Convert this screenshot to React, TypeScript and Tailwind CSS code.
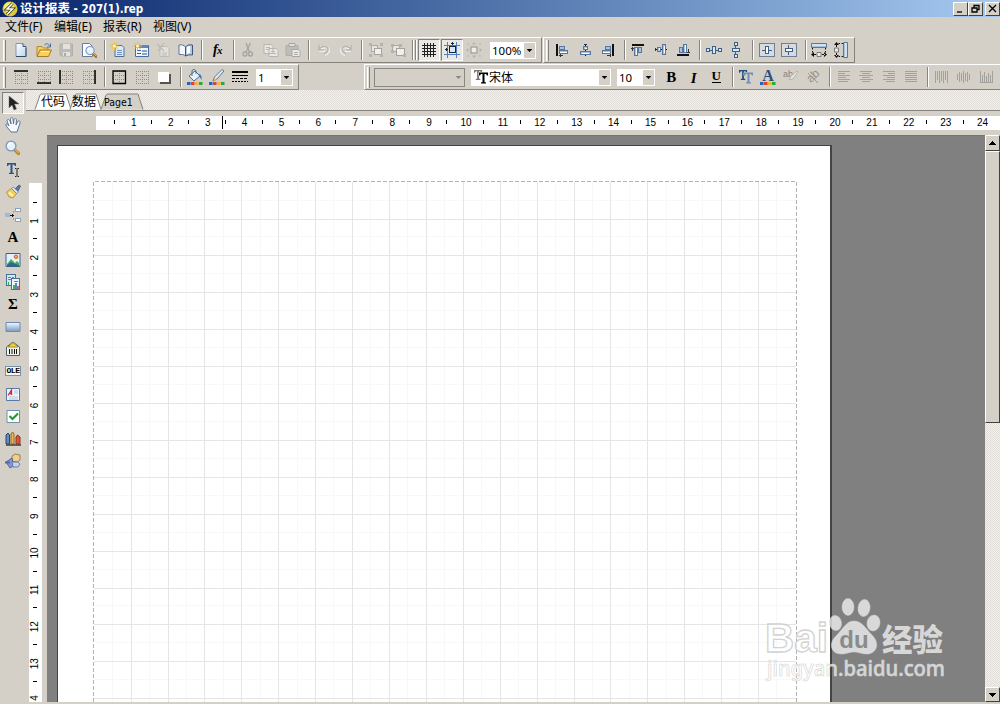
import React from "react";

type Kids = { children?: React.ReactNode };

const Svg = ({ children, crisp }: Kids & { crisp?: boolean }) => (
  <svg width="16" height="16" viewBox="0 0 16 16" className="block shrink-0" fill="none" shapeRendering={crisp ? "crispEdges" : "auto"}>
    {children}
  </svg>
);

const Cell = ({ children, w = "w-[22.5px]" }: Kids & { w?: string }) => (
  <div className={`flex h-[22px] shrink-0 items-center justify-center ${w}`}>{children}</div>
);

const Sep = ({ c = "w-[7px] pl-[4px]" }: { c?: string }) => (
  <div className={`flex h-[20px] shrink-0 ${c}`}>
    <div className="h-full w-px bg-[#888580]" />
    <div className="h-full w-px bg-white" />
  </div>
);

const Grip = () => (
  <div className="flex h-[21px] w-[4px] shrink-0">
    <div className="w-px bg-white" />
    <div className="w-px bg-[#e4e1dc]" />
    <div className="w-px bg-[#85827c]" />
  </div>
);

const Arrow = ({ dim, small }: { dim?: boolean; small?: boolean }) => (
  <svg width={small ? 5 : 7} height={small ? 3 : 4} viewBox="0 0 7 4" shapeRendering={small ? "auto" : "crispEdges"}>
    <path d="M0 0h7v1H6v1H5v1H4v1H3V3H2V2H1V1H0z" fill={dim ? "#8a8883" : "#000"} />
  </svg>
);

const Drop = () => (
  <div className="my-px mr-px flex w-[11px] shrink-0 items-center justify-center bg-[#d4d0c8]">
    <Arrow small />
  </div>
);

/* File icons */
const NewIcon = () => (
  <Svg>
    <defs><linearGradient id="sheet" x2="1" y2="1"><stop stopColor="#fff" /><stop offset="1" stopColor="#bcd4ee" /></linearGradient></defs>
    <path d="M3 1.500h7l3 3v10H3z" fill="url(#sheet)" stroke="#8397b0" />
    <path d="M10 1.500v3h3" stroke="#3d5978" fill="#c6d7e8" />
    <path d="M3 14.500h10v-9" stroke="#304b6a" />
  </Svg>
);
const OpenIcon = () => (
  <Svg>
    <path d="M1 14V4.500h5L7.500 6H12v3" fill="#f3cd62" stroke="#b08a35" />
    <path d="M1 14.500 4 8h11.500l-3 6.500z" fill="#fbd05a" stroke="#a67c26" />
    <path d="M5 9.500h8" stroke="#fff0b0" />
    <path d="M8.500 3c2-2 4-1.500 5 1M14.500 1.500v3.500H11" stroke="#4d6b91" />
  </Svg>
);
const SaveIcon = () => (
  <Svg>
    <path d="M2 2h12.500v12H3l-1-1z" fill="#bcbbb8" stroke="#b0afac" />
    <path d="M5 2h7v5H5zM5 10h7v4H5z" fill="#e3e2df" />
    <path d="M6 11h2v3H6z" fill="#aaa" />
  </Svg>
);
const Lens = ({ handle = "#b98a2c" }: { handle?: string }) => (
  <g>
    <path d="m9.500 9.500 4 4" stroke={handle} strokeWidth="3.200" strokeLinecap="round" />
    <path d="m9.500 8.800 4 4" stroke="#f0d070" strokeWidth="1" />
    <circle cx="6" cy="6" r="4.900" fill="#e3f2fc" stroke="#7d97b8" strokeWidth="1.300" />
    <path d="M3.300 5.500c.5-1.500 1.500-2.200 3-2.200" stroke="#fff" strokeWidth="1.600" />
  </g>
);
const PreviewIcon = () => (
  <Svg>
    <path d="M1.500 1.500h7l3 3v10h-10z" fill="#fafcff" stroke="#657d9b" />
    <g transform="translate(4 3.500) scale(.84)"><Lens handle="#b3682a" /></g>
  </Svg>
);
const Spark = () => (
  <>
    <path d="M4.500-.5v9M0 4h9M1.500 1l6 6M7.500 1l-6 6" stroke="#eebb30" />
    <circle cx="4.500" cy="4" r="1.600" fill="#fff3b0" />
  </>
);
const NewPageIcon = () => (
  <Svg>
    <path d="M5 3.500h7l2 2v9H5z" fill="#dceaf8" stroke="#4f6f99" />
    <path d="M7 8.500h5M7 10.500h5M7 12.500h5" stroke="#6d93c4" />
    <Spark />
  </Svg>
);
const NewDialogIcon = () => (
  <Svg>
    <path d="M2.500 3.500h13v11h-13z" fill="#f0f5fb" stroke="#486d9c" />
    <path d="M3 3h12v3H3z" fill="#5e87bb" />
    <path d="M4 8.500h4M4 11.500h4" stroke="#365c89" /><path d="M9 8h5v2H9zM9 11h5v2H9z" fill="#86a6cd" />
    <Spark />
  </Svg>
);
const DelPageIcon = () => (
  <Svg>
    <path d="M5 4.500h7l2 2v8H5z" fill="#e2e0dc" stroke="#bebcb7" />
    <path d="m2 2 7 7M9 1 3 9M7 11h5M7 13h5" stroke="#bbb9b4" strokeWidth="1.200" />
  </Svg>
);
const BookIcon = () => (
  <Svg>
    <path d="M1 3c3-.5 4.500 0 6.500 2v9C6 12.500 4 12.300 1 12.500z" fill="#f4f8fc" stroke="#5d7696" />
    <path d="M7.500 5c1.500-2 3.500-2.500 7-2v10c-3-.5-5 0-7 1z" fill="#b4cae4" stroke="#3c5678" />
    <path d="M9 5.500c1-1 2-1.300 3-1.400v7c-1 0-2 .3-3 1z" fill="#fff" />
  </Svg>
);

/* Edit icons */
const CutIcon = () => (
  <Svg><g stroke="#a5a4a0" strokeWidth="1.300"><path d="m6 1 3.500 9M10.500 1 6 10" /><circle cx="5" cy="12" r="2" /><circle cx="10.500" cy="12" r="2" /></g></Svg>
);
const CopyIcon = () => (
  <Svg>
    <path d="M1 2.500h7l2 2v7H1zM6 6.500h7l2 2v6H6z" fill="#e8e7e4" stroke="#b6b5b1" />
    <path d="M3 5.500h4M3 7.500h3M8 9.500h4M8 11.500h5" stroke="#b7b6b2" />
  </Svg>
);
const PasteIcon = () => (
  <Svg>
    <path d="M1 3.500h12v10H1z" fill="#bfbdb9" stroke="#aeada9" /><path d="M4 1.500h6v3H4z" fill="#ddd" stroke="#a5a5a5" />
    <path d="M7 7.500h6l2 2v5H7z" fill="#ecebe8" stroke="#a8a7a3" /><path d="M9 10.500h4M9 12.500h4" stroke="#aaa" />
  </Svg>
);
const UndoIcon = ({ flip }: { flip?: boolean }) => (
  <Svg><g transform={flip ? "translate(16 0) scale(-1 1)" : ""}><path d="M3 3v5h5M3 8c1-4 8-5 9-1 .5 3-2 4-4 5" stroke="#f0efec" strokeWidth="2" transform="translate(1 1)" /><path d="M3 3v5h5M3 8c1-4 8-5 9-1 .5 3-2 4-4 5" stroke="#b8b7b3" strokeWidth="1.500" /></g></Svg>
);
const GroupIcon = ({ alt }: { alt?: boolean }) => (
  <Svg crisp>
    <path d={alt ? "M2.500 3.500h7v6h-7z" : "M3.500 3.500h6v6h-6z"} fill="#e7e6e3" stroke="#aaa9a5" />
    <path d={alt ? "M6.500 6.500h8v7h-8z" : "M6.500 6.500h7v6h-7z"} fill="#f0efec" stroke="#a3a29e" />
    {(alt ? [[1, 2], [9, 2], [1, 8], [13, 12]] : [[1, 1], [12, 1], [1, 12], [12, 12]]).map(([x, y]) => (
      <path key={`${x}-${y}`} d={`M${x} ${y}h3v3h-3z`} fill="#b4b3ae" />
    ))}
  </Svg>
);
const GridIcon = () => (
  <Svg crisp><path d="M3.500 1v14M6.500 1v14M9.500 1v14M12.500 1v14M1 3.500h14M1 6.500h14M1 9.500h14M1 12.500h14" stroke="#222" /></Svg>
);
const SnapIcon = () => (
  <Svg crisp>
    <path d="M3.500 0v16M12.500 0v16M0 3.500h16M0 12.500h16" stroke="#4b80c4" />
    <path d="M5.500 4.500h6v6h-6z" fill="#dbe6f2" stroke="#17253c" /><path d="M1 7.500h3M8.500 0v3" stroke="#17253c" />
    <path d="M2 6h1v3H2zM7 1h3v1H7z" fill="#17253c" />
  </Svg>
);
const ResizeIcon = () => (
  <Svg><path d="M5 5h6v6H5z" fill="#efeeeb" stroke="#aaa8a4" strokeWidth="1.500" /><path d="M8 0 6 2.500h4zM8 16l-2-2.500h4zM0 8l2.500-2v4zM16 8l-2.500-2v4z" fill="#b4b2ae" /><path d="M1 2h2M13 2h2M1 14h2M13 14h2" stroke="#b4b2ae" /></Svg>
);

/* Alignment icons: one drawing rotated where the axis changes */
const B = { fill: "#a9c3df", stroke: "#56779f" };
const AlignL = ({ r = 0, flip }: { r?: number; flip?: boolean }) => (
  <Svg crisp>
    <g transform={`${flip ? "translate(0 16) scale(1 -1) " : ""}rotate(${r} 8 8)`}>
      <path d="M2 2h2v12H2z" fill="#111" /><path d="M5.500 4.500h5v3h-5zM5.500 8.500h8v3h-8z" {...B} />
      <path d="M6 10h7" stroke="#fff" /><path d="M5 13.500h4M6 12v3" stroke="#333" />
    </g>
  </Svg>
);
const AlignC = ({ r = 0 }: { r?: number }) => (
  <Svg crisp><g transform={`rotate(${r} 8 8)`}><path d="M8.500 2v12" stroke="#111" /><path d="M6.500 4.500h4v3h-4zM3.500 9.500h10v3h-10z" {...B} /><path d="M5 11h7M8 6h2" stroke="#fff" /><path d="M7 2h3v1H7z" fill="#333" /></g></Svg>
);
const Space = ({ r = 0 }: { r?: number }) => (
  <Svg crisp><g transform={`rotate(${r} 8 8)`}><path d="M3 8.500h10" stroke="#3c5f8b" /><path d="M.5 6.500h3v3h-3zM6.500 4.500h3v7h-3zM12.500 6.500h3v3h-3z" fill="#dce8f3" stroke="#3c5f8b" /></g></Svg>
);
const CenterIn = ({ r = 0 }: { r?: number }) => (
  <Svg crisp><path d="M.5 1.500h15v13H.5z" stroke="#6d8094" fill="#d8dadb" /><g transform={`rotate(${r} 8 8)`}><path d="M3 8.500h10" stroke="#3c5f8b" /><path d="M6.500 4.500h3v7h-3z" fill="#fff" stroke="#3c5f8b" /></g></Svg>
);
const SameSize = ({ tall }: { tall?: boolean }) => (
  <Svg>
    <g transform={tall ? "rotate(90 8 8)" : ""}>
      <path d="M.5 1.500h15v4H.5z" {...B} /><path d="M1 3h14" stroke="#fff" />
      <path d="M1.500 6v6M14.500 6v6" stroke="#111" strokeDasharray="1.500 1.500" />
      <path d="M6 10.500h4v4H6z" fill="#eee" stroke="#777" />
      <path d="M3 10v5l-3-2.500zM13 10v5l3-2.500zM2 12h3v1H2zM11 12h3v1h-3z" fill="#111" />
    </g>
  </Svg>
);

/* Border icons */
const Dots = () => <path d="M2 2.500h13M2 6.500h13M2 10.500h13M2 14.500h13M2.500 2v13M8.500 2v13M14.500 2v13" stroke="#8e8b86" strokeDasharray="1 1" />;
const BorderIcon = ({ d, w = 1.5 }: { d?: string; w?: number }) => (
  <Svg><g shapeRendering="crispEdges"><Dots /></g>{d && <path d={d} stroke="#000" strokeWidth={w} />}</Svg>
);
const ShadowIcon = () => (
  <Svg crisp><path d="M4 5h11v10H4z" fill="#57544f" /><path d="M2 3h11v10H2z" fill="#fff" /></Svg>
);
const Palette = () => (
  <>
    <path d="M0 13h3.500v3H0z" fill="#2463c4" /><path d="M4 13h3.500v3H4z" fill="#e3432b" /><path d="M8 13h3.500v3H8z" fill="#f0b72a" /><path d="M12 13h3.500v3H12z" fill="#29a83c" />
  </>
);
const BucketIcon = () => (
  <Svg><path d="m2 7 6-5 5 5-6 5z" fill="#e8f1f8" stroke="#496b91" /><path d="M5 7V3c0-4 4-3 4 0v2" stroke="#496b91" /><path d="M11 5c3 0 4 2 3.500 6L12 7z" fill="#3b78bb" /><Palette /></Svg>
);
const PenIcon = () => (
  <Svg><path d="m13 .5 2 1.500-7 8-4 2 1.500-4z" fill="#dfe9f2" stroke="#5d789a" /><path d="m5.500 8.500 2 2-3 1.500z" fill="#efb84f" /><Palette /></Svg>
);
const LineIcon = () => (
  <Svg crisp><path d="M0 3h16" stroke="#000" strokeWidth="2" /><path d="M0 6.500h16" stroke="#000" /><path d="M0 9.500h16" stroke="#000" strokeDasharray="3 1" /><path d="M0 12.500h16" stroke="#000" strokeDasharray="2 1" /></Svg>
);

const Glyph = ({ children, c }: Kids & { c: string }) => <span className={`leading-none ${c}`}>{children}</span>;
const TextLines = ({ d }: { d: string }) => <Svg crisp><path d={d} stroke="#a3a19d" /></Svg>;
const TLetter = "M0 0h9v3H8L7 1.500H5.500v8L7 10v1H2v-1l1.500-.5v-8H2L1 3H0z";
const FontTT = ({ blue }: { blue?: boolean }) => (
  <Svg>
    <path d={TLetter} transform="translate(1 1) scale(.9)" fill={blue ? "#244c7d" : "#77746f"} />
    <path d={TLetter} transform="translate(6 3.500)" stroke={blue ? "#d4d0c8" : "#fff"} strokeWidth="1" />
    <path d={TLetter} transform="translate(6 3.500)" fill={blue ? "#6b8fb8" : "#000"} />
  </Svg>
);

/* Side palette icons */
const Pointer = () => <Svg><path d="M4 1v12l3-3 2 5 2.500-1-2-5H14z" fill="#222" stroke="#777" strokeWidth=".5" /></Svg>;
const Hand = () => (
  <Svg><path d="M6 15 2 10C0 7 1 6 3 8l1 1-2-5c0-2 2-2 3 0l1 3-.5-5C5.500 0 8 0 8 2l.5 5L9 3c.5-2 2.500-1.500 2.500 0L11 8l1.500-3c1-2 3-1 2.500 1l-2 6-1 3z" fill="#f6faff" stroke="#5b7799" /></Svg>
);
const TIcon = () => (
  <Svg><path d={TLetter} transform="translate(2 1)" fill="#2b5687" /><path d="M10 6.500h1.500M12.500 6.500H14M12 7v7M10 14.500h1.500M12.500 14.500H14" stroke="#222" /></Svg>
);
const Brush = () => (
  <Svg><path d="m10 5 4-4 1.500 1-2.500 5z" fill="#5c73ad" stroke="#34466f" strokeWidth=".7" /><path d="m1.500 8 5-3.500 5 5L8 14l-4-1z" fill="#f2cf5b" stroke="#a88c43" strokeWidth=".8" /><path d="m6.500 4.500 2-1.500 5 5-2 1.500z" fill="#dbe4ed" stroke="#56739b" strokeWidth=".7" /><path d="m4 8.500 4 3.500" stroke="#fff6c5" strokeWidth="2" /></Svg>
);
const Connector = () => (
  <Svg crisp><path d="M0 6h5v4H0z" fill="#9fbad6" /><path d="M10.500 1.500h5v3h-5zM10.500 11.500h5v3h-5z" fill="#fff" stroke="#8aa4bf" /><path d="M5 8.500h4M7 7v3" stroke="#111" /><path d="M8.500 4v2M8.500 11v2" stroke="#8aa4bf" /></Svg>
);
const Picture = () => (
  <Svg><path d="M1 1.500h14v13H1z" fill="#e4f1fc" stroke="#38608e" /><circle cx="11" cy="4.800" r="1.800" fill="#f0a060" stroke="#c8683a" /><path d="m2 12 4-5 4 4 2-2 2 2v3H2z" fill="#4caa5c" /><path d="m2 13 4-3 4 2 4 1v1H2z" fill="#2a6c78" /></Svg>
);
const SubReport = () => (
  <Svg crisp><path d="M1.500.5h9v11h-9z" fill="#d6e6f5" stroke="#45709c" /><path d="M6.500 4.500h8v11h-8z" fill="#eaf4fc" stroke="#45709c" /><path d="M3 3h3M7 3h2M3 5h3M9 7h4" stroke="#538f7a" /><path d="M3 8h1v3H3z" fill="#3aa860" /><path d="M8 11h2v4H8z" fill="#45ad69" /><path d="M10 9h2v6h-2z" fill="#4788d1" /><path d="M12 12h2v3h-2z" fill="#e16348" /></Svg>
);
const Band = () => (
  <Svg><defs><linearGradient id="band" x2="0" y2="1"><stop stopColor="#f4f9ff" /><stop offset="1" stopColor="#7898c5" /></linearGradient></defs><path d="M1 3.500h14v9H1z" fill="url(#band)" stroke="#6f8ab2" /></Svg>
);
const Barcode = () => (
  <Svg><path d="M1.500 6 8 1l6.500 5v8.500h-13z" fill="#f4f3e8" stroke="#4a6070" /><path d="m3 6 5-4.500L13 6z" fill="#f1d13a" stroke="#a08f34" /><path d="M4.500 8v5M7 8v5M9.500 8v5M11.500 8v5" stroke="#111" /></Svg>
);
const Ole = () => (
  <div className="flex h-[10px] w-[16px] items-center justify-center border border-[#7b91a8] bg-[#f5f5f3]">
    <span className="font-['Liberation_Mono',monospace] text-[8px] leading-none font-bold tracking-[-.4px] text-black">OLE</span>
  </div>
);
const Rich = () => (
  <Svg><path d="M1.500 2.500h13v12h-13z" fill="#eef4fc" stroke="#5878a5" /><path d="M3 9.500 6.500 4v5M4 7.500h3" stroke="#d22b34" strokeWidth="1.300" /><path d="M9 5h4M9 7h4M4 11h9M4 13h9" stroke="#b0c2d8" /></Svg>
);
const Check = () => <Svg><path d="M2 2.500h12.500v12H2z" fill="#fff" stroke="#6c91a8" /><path d="m4.500 8 3 3L13 5.500" stroke="#239b35" strokeWidth="2.200" /></Svg>;
const Chart = () => (
  <Svg><path d="M1 4 3 2l1.500 2v9H1z" fill="#618bc1" stroke="#27476f" /><path d="M6 3 7.500 1 9 3v10H6z" fill="#f0b848" stroke="#8f6524" /><path d="M11 6l1.500-2L15 6v7h-4z" fill="#e0552f" stroke="#863421" /><path d="M1 14h15" stroke="#4a3a33" strokeWidth="1.500" /></Svg>
);
const Shapes = () => (
  <Svg><path d="m7 3 3-2 5 1v5l-3 2-5-1z" fill="#ecd08a" stroke="#86713f" strokeWidth=".8" /><path d="m1 9 6-4 1.500 8L5 15z" fill="#8895cf" stroke="#46558e" strokeWidth=".8" /><path d="M7 9h6l2 2-2 3H8z" fill="#c5d0ee" stroke="#596ba0" strokeWidth=".8" /><path d="M0 9.500h5" stroke="#5869aa" strokeWidth="2" /></Svg>
);
const BoldGlyph = ({ children }: Kids) => <Glyph c="font-['Liberation_Serif',serif] text-[15px] font-bold text-black">{children}</Glyph>;

const Tab = ({ label, active, w, text }: { label: string; active?: boolean; w: number; text: string }) => (
  <div className={`relative flex h-[17px] shrink-0 items-center ${active ? "w-[42px]" : w === 36 ? "w-[35px]" : "w-[31px]"}`}>
    <svg className="absolute top-0 left-0 overflow-visible" width={w} height="17" viewBox={`0 0 ${w} 17`}>
      <path d={`M0 16.500 5 2Q5.500 1 6.500 1H${w - 5}L${w} 16.500`} fill={active ? "#d4d0c8" : "#fff"} stroke="#85827c" />
    </svg>
    <span className={`relative whitespace-nowrap text-black ${text}`}>{label}</span>
  </div>
);

const WinBtn = ({ d, c = "" }: { d: string; c?: string }) => (
  <div className={`flex h-[14px] w-[15px] items-center justify-center border border-t-white border-r-[#404040] border-b-[#404040] border-l-white bg-[#d4d0c8] ${c}`}>
    <svg width="11" height="10" viewBox="0 0 11 10" fill="none"><path d={d} stroke="#000" strokeWidth="1.300" /></svg>
  </div>
);

const cm = 36.9;
const range = (n: number) => Array.from({ length: n }, (_, i) => i);
const bar = "flex h-[26px] shrink-0 items-center border-t border-b border-t-white border-b-[#85827c] bg-[#d4d0c8]";

const HRuler = () => (
  <svg className="block" width="904" height="14" viewBox="0 0 904 14">
    <rect width="904" height="14" fill="#fff" />
    <g fontFamily="Liberation Sans, sans-serif" fontSize="10" textAnchor="middle" fill="#000">
      {range(24).map((i) => <text key={i} x={1 + cm * (i + 1)} y="10">{i + 1}</text>)}
    </g>
    {range(25).map((i) => <rect key={i} x={Math.round(18 + cm * i)} y="4" width="1" height="4" fill="#000" />)}
    <rect x="126" y="0" width="1" height="13" fill="#000" />
  </svg>
);

const VRuler = () => (
  <svg className="block" width="13" height="519" viewBox="0 0 13 519">
    <rect width="13" height="519" fill="#fff" />
    <g fontFamily="Liberation Sans, sans-serif" fontSize="10" textAnchor="middle" fill="#000">
      {range(13).map((i) => <text key={i} transform={`translate(9 ${1 + cm * (i + 1)}) rotate(-90)`}>{i + 1}</text>)}
      <text transform="translate(9 515) rotate(-90)">4</text>
    </g>
    {range(14).map((i) => <rect key={i} x="4" y={Math.round(18.500 + cm * i)} width="4" height="1" fill="#000" />)}
  </svg>
);

const PageGrid = () => (
  <svg className="block" width="704" height="521" viewBox="0 0 704 521" shapeRendering="crispEdges">
    {range(19).map((i) => <rect key={i} x={Math.round(19 + cm * i)} y="1" width="1" height="520" fill="#f8f8f8" />)}
    {range(14).map((i) => <rect key={i} x="1" y={Math.round(18.500 + cm * i)} width="702" height="1" fill="#f8f8f8" />)}
    {range(18).map((i) => <rect key={i} x={Math.round(cm * (i + 1) + 0.8)} y="1" width="1" height="520" fill="#e5e5e5" />)}
    {range(14).map((i) => <rect key={i} x="1" y={Math.round(cm * (i + 1) + 0.6)} width="702" height="1" fill="#e5e5e5" />)}
    <path d="M.5 521V.5h703V521" fill="none" stroke="#b3b3b3" strokeDasharray="4 2" />
  </svg>
);

const Watermark = () => (
  <svg className="absolute top-[594px] left-[762px]" width="190" height="92" viewBox="0 0 190 92">
    <g fill="#fff" fillOpacity=".7">
      <text x="3" y="58" fontFamily="Liberation Sans, sans-serif" fontWeight="bold" fontSize="41" textLength="63" lengthAdjust="spacingAndGlyphs" stroke="#d2d2d2" strokeWidth="1.300">Bai</text>
      <g stroke="#d2d2d2" strokeOpacity=".5">
        <ellipse cx="73.500" cy="29" rx="6" ry="7.500" transform="rotate(-10 73.500 29)" />
        <ellipse cx="86" cy="13" rx="6" ry="8.500" />
        <ellipse cx="102" cy="14" rx="6" ry="8.500" transform="rotate(8 102 14)" />
        <ellipse cx="111.500" cy="29" rx="6.500" ry="8" transform="rotate(10 111.500 29)" />
        <path d="M92 27c8 0 12 8 18 14 9 9 4 19-5 19-6 0-8-2-13-2s-7 2-13 2c-10 0-13-11-5-18 7-7 10-15 18-15z" />
      </g>
      <text x="120" y="57" fontFamily="Noto Sans CJK SC, sans-serif" fontWeight="900" fontSize="31" textLength="61" lengthAdjust="spacingAndGlyphs">经验</text>
      <text x="5" y="82" fontFamily="Noto Sans, sans-serif" fontWeight="500" fontSize="21" textLength="178" lengthAdjust="spacingAndGlyphs" stroke="#d2d2d2" strokeWidth=".6">jingyan.baidu.com</text>
    </g>
    <text x="92" y="54" textAnchor="middle" fontFamily="Liberation Sans, sans-serif" fontWeight="bold" fontSize="24" fill="#8b8b8b">du</text>
  </svg>
);

const dither = "bg-[repeating-conic-gradient(#f3f1ee_0_25%,#e0ddd8_0_50%)] bg-[length:2px_2px]";
const cjk = "font-['Noto_Sans','Noto_Sans_CJK_SC',sans-serif]";
const side = [<Hand />, <Svg><Lens /></Svg>, <TIcon />, <Brush />, <Connector />, <BoldGlyph>A</BoldGlyph>, <Picture />, <SubReport />, <BoldGlyph>Σ</BoldGlyph>, <Band />, <Barcode />, <Ole />, <Rich />, <Check />, <Chart />, <Shapes />];

export default function App() {
  return (
    <div className={`relative flex h-[704px] w-[1000px] flex-col overflow-hidden bg-[#d4d0c8] text-black ${cjk}`}>
      <header className="flex h-[17px] shrink-0 items-center bg-linear-to-r from-[#0a246a] to-[#a6caf0] pl-[2px]">
        <svg width="16" height="16" viewBox="0 0 16 16" className="shrink-0"><circle cx="8" cy="8" r="7.500" fill="#d9c93c" /><circle cx="7" cy="6.500" r="5" fill="#f3ec86" /><path d="M10.500 2.500 5 8h5.500L5 13.500" stroke="#343213" strokeWidth="3" fill="none" /><path d="M10.500 2.500 5 8h5.500L5 13.500" stroke="#fff" strokeWidth="1.500" fill="none" /></svg>
        <span className="ml-[2px] flex-1 text-[12.5px] leading-[17px] font-bold whitespace-pre text-white">设计报表<span className="font-['DejaVu_Sans_Condensed'] text-[11.500px]"> - 207(1).rep</span></span>
        <WinBtn d="M2 8h5" /><WinBtn d="M4 4V1.500h5v4H7M2 4h5v4H2z" /><WinBtn c="ml-[2px]" d="m2 1 7 7M9 1 2 8" />
      </header>
      <nav className="flex h-[20px] shrink-0 items-center text-[12px] leading-none">
        <span className="w-[49px] pl-[5px] whitespace-nowrap">文件<span>(F)</span></span>
        <span className="w-[49px] pl-[5px] whitespace-nowrap">编辑<span>(E)</span></span>
        <span className="w-[50px] pl-[5px] whitespace-nowrap">报表<span>(R)</span></span>
        <span className="pl-[5px] whitespace-nowrap">视图<span>(V)</span></span>
      </nav>

      <div className="flex h-[26px] shrink-0">
        <div className={`${bar} w-[542px] border-r border-r-[#85827c] pl-[3px]`}>
          <Grip /><div className="w-[3px]" />
          <Cell><NewIcon /></Cell><Cell><OpenIcon /></Cell><Cell><SaveIcon /></Cell><Cell><PreviewIcon /></Cell>
          <Sep />
          <Cell><NewPageIcon /></Cell><Cell><NewDialogIcon /></Cell><Cell><DelPageIcon /></Cell><Cell><BookIcon /></Cell>
          <Sep c="w-[8px] pl-[4px]" />
          <Cell w="w-[25px]"><Glyph c="font-['Liberation_Serif',serif] text-[14px] font-bold italic tracking-[-.5px]">f<span className="text-[11px]">x</span></Glyph></Cell>
          <Sep c="w-[7px] pl-[3px]" />
          <Cell><CutIcon /></Cell><Cell><CopyIcon /></Cell><Cell><PasteIcon /></Cell>
          <Sep c="w-[8px] pl-[3px]" />
          <Cell><UndoIcon /></Cell><Cell><UndoIcon flip /></Cell>
          <Sep c="w-[7px] pl-[3px]" />
          <Cell><GroupIcon /></Cell><Cell><GroupIcon alt /></Cell>
          <Sep c="w-[4px] pl-[2px]" /><Sep c="w-[4px] pl-[1px]" />
          <div className="flex h-[22px] w-[22px] shrink-0 items-center justify-center border border-t-[#808080] border-r-white border-b-white border-l-[#808080] bg-[#eae8e3]"><GridIcon /></div>
          <div className="ml-px flex h-[22px] w-[22px] shrink-0 items-center justify-center border border-t-[#808080] border-r-white border-b-white border-l-[#808080] bg-[#eae8e3]"><SnapIcon /></div>
          <Cell><ResizeIcon /></Cell>
          <div className="ml-[5px] flex h-[17px] w-[46px] shrink-0 bg-white"><span className="flex-1 pl-[2px] text-[11.5px] leading-[17px]">100%</span><Drop /></div>
        </div>
        <div className={`${bar} ml-px w-[312px] border-r border-l border-r-[#85827c] border-l-white pl-[2px]`}>
          <Grip /><div className="w-px" />
          <Cell w="w-[22.5px]"><AlignL /></Cell><Cell w="w-[23px]"><AlignC /></Cell><Cell w="w-[23.5px]"><AlignL r={180} flip /></Cell>
          <Sep c="w-[7px] pl-[4px]" />
          <Cell><AlignL r={90} /></Cell><Cell><AlignC r={-90} /></Cell><Cell><AlignL r={-90} /></Cell>
          <Sep c="w-[8px] pl-[4px]" />
          <Cell><Space /></Cell><Cell><Space r={90} /></Cell>
          <Sep c="w-[8px] pl-[4px]" />
          <Cell><CenterIn /></Cell><Cell><CenterIn r={90} /></Cell>
          <Sep c="w-[7px] pl-[4px]" />
          <Cell><SameSize /></Cell><Cell><SameSize tall /></Cell>
        </div>
      </div>

      <div className="mt-px flex h-[26px] shrink-0">
        <div className={`${bar} w-[299px] border-r border-r-[#85827c] pl-[3px]`}>
          <Grip /><div className="w-[3px]" />
          <Cell><BorderIcon d="M1 2h14" /></Cell><Cell><BorderIcon d="M1 14h14" /></Cell><Cell><BorderIcon d="M2 1v14" /></Cell><Cell><BorderIcon d="M14 1v14" /></Cell>
          <Sep c="w-[8px] pl-[4px]" />
          <Cell><BorderIcon w={1.3} d="M2 2h12.500v12.500H2z" /></Cell><Cell><BorderIcon /></Cell><Cell><ShadowIcon /></Cell>
          <Sep c="w-[8px] pl-[4px]" />
          <Cell><BucketIcon /></Cell><Cell><PenIcon /></Cell><Cell><LineIcon /></Cell>
          <div className="ml-[5px] flex h-[17px] w-[37px] shrink-0 bg-white"><span className="flex-1 pl-[2px] text-[11.5px] leading-[17px]">1</span><Drop /></div>
        </div>
        <div className={`${bar} ml-[65px] flex-1 border-l border-l-white pl-[2px]`}>
          <Grip />
          <div className="ml-[3px] flex h-[19px] w-[91px] shrink-0 items-center justify-end border border-[#8a8782] pr-[3px]"><Arrow dim small /></div>
          <div className="ml-[6px] flex h-[17px] w-[140px] shrink-0 items-center bg-white pl-[2px]"><FontTT /><span className="flex-1 text-[12px] leading-[17px]">宋体</span><div className="flex self-stretch"><Drop /></div></div>
          <div className="ml-[6px] flex h-[17px] w-[38px] shrink-0 bg-white"><span className="flex-1 pl-[2px] text-[11.5px] leading-[17px]">10</span><Drop /></div>
          <div className="w-[5px]" />
          <Cell><BoldGlyph>B</BoldGlyph></Cell><Cell><span className="italic"><BoldGlyph>I</BoldGlyph></span></Cell>
          <Cell><span className="border-b border-black pb-px"><Glyph c="block h-[10px] -translate-y-[2px] font-['Liberation_Serif',serif] text-[13px] font-bold">U</Glyph></span></Cell>
          <Sep c="w-[7px] pl-[4px]" />
          <Cell><FontTT blue /></Cell>
          <Cell><Svg><text x="8" y="12" textAnchor="middle" fontFamily="Liberation Serif, serif" fontWeight="bold" fontSize="16" fill="#294f83">A</text><Palette /></Svg></Cell>
          <Cell><Svg><text x="0" y="8" fontFamily="Liberation Sans, sans-serif" fontSize="9" fill="#85837f">ab</text><path d="m15 3-5 7-4 1 2-4 6-5z" fill="#e5e3de" stroke="#b6b4af" /></Svg></Cell>
          <Cell><Svg><text x="2" y="11" transform="rotate(-45 8 8)" fontFamily="Liberation Sans, sans-serif" fontSize="12" fill="#918f8b">ab</text><path d="m3 4 10 10" stroke="#999" /></Svg></Cell>
          <Sep c="w-[8px] pl-[4px]" />
          <Cell><TextLines d="M2 2.500h12M2 4.500h7M2 6.500h12M2 8.500h8M2 10.500h12M2 12.500h10" /></Cell>
          <Cell><TextLines d="M2 2.500h12M4 4.500h8M1 6.500h14M4 8.500h8M2 10.500h13M4 12.500h8" /></Cell>
          <Cell><TextLines d="M2 2.500h12M7 4.500h7M2 6.500h12M6 8.500h8M2 10.500h12M5 12.500h9" /></Cell>
          <Cell><TextLines d="M2 2.500h12M2 4.500h12M2 6.500h12M2 8.500h12M2 10.500h12M2 12.500h12" /></Cell>
          <Sep c="w-[8px] pl-[4px]" />
          <Cell><TextLines d="M1.500 2v12M3.500 2v9M5.500 2v12M7.500 2v10M9.500 2v12M11.500 2v9M13.500 2v12" /></Cell>
          <Cell><TextLines d="M1.500 5v6M3.500 3v10M5.500 4v8M7.500 2v12M9.500 4v8M11.500 3v10M13.500 5v6" /></Cell>
          <Cell><TextLines d="M1.500 2v12M3.500 6v8M5.500 3v11M7.500 7v7M9.500 4v10M11.500 6v8M13.500 2v12M1 13.500h13" /></Cell>
        </div>
      </div>

      <main className="flex min-h-0 flex-1">
        <aside className="flex w-[26px] shrink-0 flex-col items-center pt-[2px]">
          <div className={`flex h-[22px] w-[22px] shrink-0 items-center justify-center border border-t-[#808080] border-r-white border-b-white border-l-[#808080] ${dither}`}><Pointer /></div>
          {side.map((icon, i) => <div key={i} className="flex h-[22.4px] shrink-0 items-center justify-center">{icon}</div>)}
        </aside>
        <section className="flex min-w-0 flex-1 flex-col">
          <div className={`flex h-[21px] shrink-0 items-end border-b border-[#85827c] pl-[9px] ${dither}`}>
            <Tab label="代码" w={36} text="pl-[6px] text-[12px]" />
            <Tab label="数据" w={31} text="pl-[2px] text-[12px]" />
            <Tab label="Page1" w={42} active text="pt-[2px] pl-[3px] font-['DejaVu_Sans_Condensed'] text-[10.5px]" />
          </div>
          <div className="mt-[5px] flex h-[14px] shrink-0 justify-end"><HRuler /></div>
          <div className="mt-[5px] flex min-h-0 flex-1">
            <div className="flex w-[21px] shrink-0 flex-col pt-[48px] pl-[3px]"><VRuler /></div>
            <div className="mb-[2px] flex min-w-0 flex-1 overflow-hidden border-t border-[#77746f] bg-[#808080] pt-[9px] pl-[10px]">
              <div className="flex h-[558px] w-[775px] shrink-0 flex-col overflow-hidden border-t border-r-2 border-l border-[#444] bg-white pt-[35px] pl-[35px]"><PageGrid /></div>
            </div>
            <div className={`mb-[2px] flex w-[15px] shrink-0 flex-col justify-between ${dither}`}>
              <div className="flex flex-col">
                <div className="flex h-[16px] items-center justify-center border border-t-white border-r-[#404040] border-b-[#404040] border-l-white bg-[#d4d0c8]"><div className="rotate-180"><Arrow /></div></div>
                <div className="h-[272px] border border-t-white border-r-[#404040] border-b-[#404040] border-l-white bg-[#d4d0c8]" />
              </div>
              <div className="flex h-[15px] items-center justify-center border border-t-white border-r-[#404040] border-b-[#404040] border-l-white bg-[#d4d0c8]"><Arrow /></div>
            </div>
          </div>
        </section>
      </main>
      <Watermark />
    </div>
  );
}
